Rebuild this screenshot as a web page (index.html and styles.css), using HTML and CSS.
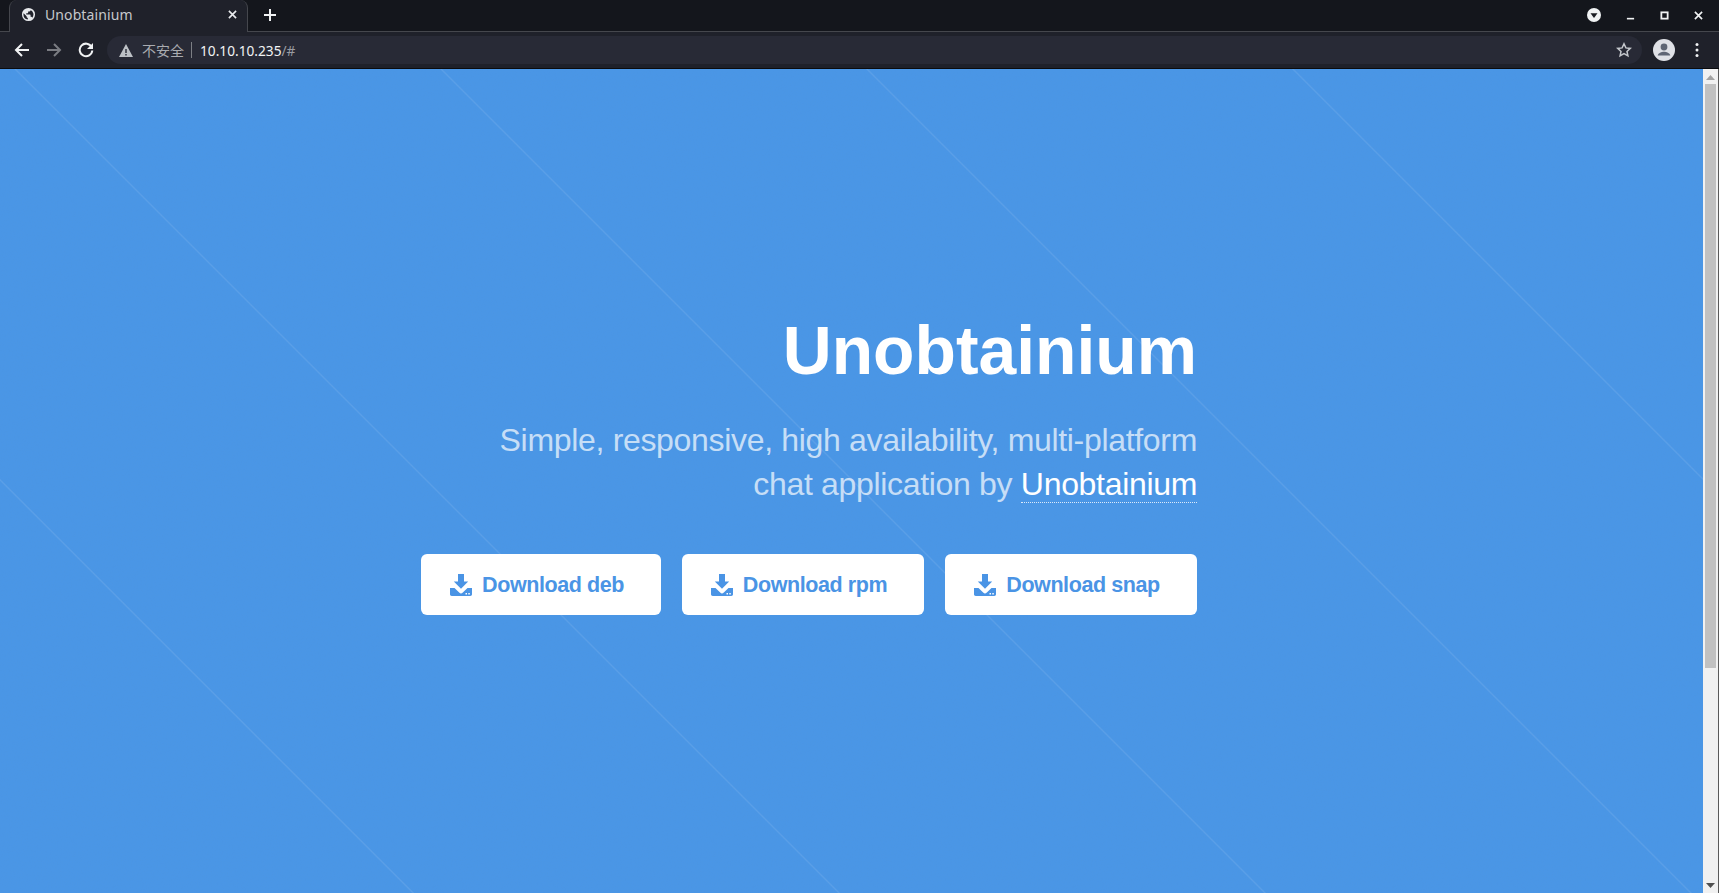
FILE: index.html
```html
<!DOCTYPE html>
<html lang="en">
<head>
  <meta charset="UTF-8">
  <title>Unobtainium</title>
  <link rel="stylesheet" href="styles.css">
</head>
<body>
  <div class="tabstrip">
    <div class="tab">
      <svg class="tab-globe" viewBox="0 0 16 16"><path fill="#e8eaed" d="M8 1a7 7 0 1 0 0 14A7 7 0 0 0 8 1zM2.600 8c0-.5.1-1 .2-1.400L6 9.800v.7c0 .7.6 1.300 1.300 1.300v1.600A5.400 5.400 0 0 1 2.600 8zm9.400 3.400c-.2-.5-.7-.9-1.200-.9h-.6V8.700c0-.4-.3-.7-.7-.7H5.600V6.700h1.300c.4 0 .7-.3.7-.7V4.700h1.400c.7 0 1.300-.6 1.300-1.300v-.3A5.400 5.400 0 0 1 12 11.400z"/></svg>
      <span class="tab-title">Unobtainium</span>
      <svg class="tab-close" viewBox="0 0 10 10"><path d="M1 1l8 8M9 1L1 9" stroke="#e8eaed" stroke-width="1.800"/></svg>
    </div>
    <svg class="new-tab" viewBox="0 0 12 12"><path d="M6 0v12M0 6h12" stroke="#f1f3f4" stroke-width="2"/></svg>
    <div class="window-controls">
      <span class="profile-drop"><svg viewBox="0 0 14 14"><circle cx="7" cy="7" r="7" fill="#f1f3f4"/><path d="M3.500 5.200h7L7 10z" fill="#1a1c22"/></svg></span>
      <svg class="win-btn" viewBox="0 0 10 10"><path d="M1 8.500h8" stroke="#f1f3f4" stroke-width="1.800"/></svg>
      <svg class="win-btn" viewBox="0 0 10 10"><rect x="1.500" y="1.500" width="7" height="7" fill="none" stroke="#f1f3f4" stroke-width="2"/></svg>
      <svg class="win-btn" viewBox="0 0 10 10"><path d="M1 1l8 8M9 1L1 9" stroke="#f1f3f4" stroke-width="1.800"/></svg>
    </div>
  </div>

  <div class="toolbar">
    <svg class="nav-icon" viewBox="0 0 16 16"><path d="M15 8H2M8 2L2 8l6 6" fill="none" stroke="#f1f3f4" stroke-width="2"/></svg>
    <svg class="nav-icon" viewBox="0 0 16 16"><path d="M1 8h13M8 2l6 6-6 6" fill="none" stroke="#7a7c82" stroke-width="2"/></svg>
    <svg class="nav-icon" viewBox="0 0 16 16"><path d="M13.600 5A6.300 6.300 0 1 0 14.300 8.500" fill="none" stroke="#f1f3f4" stroke-width="2"/><path d="M15 1v6H9z" fill="#f1f3f4"/></svg>
    <div class="omnibox">
      <svg class="warn-icon" viewBox="0 0 14 13"><path fill-rule="evenodd" fill="#bdc1c6" d="M7 0l7 13H0zM6.300 5v4h1.400V5zm0 5v1.400h1.400V10z"/></svg>
      <span class="not-secure">不安全</span>
      <span class="omni-sep"></span>
      <span class="url">10.10.10.235<span class="url-rest">/#</span></span>
      <svg class="star-icon" viewBox="0 0 16 16"><path d="M8 1.800l1.900 4.100 4.400.5-3.300 3 .9 4.400L8 11.600l-3.900 2.200.9-4.400-3.300-3 4.400-.5z" fill="none" stroke="#c4c7cc" stroke-width="1.500"/></svg>
    </div>
    <svg class="avatar" viewBox="0 0 22 22"><circle cx="11" cy="11" r="11" fill="#dfe1e6"/><circle cx="11" cy="8" r="3.400" fill="#5f6674"/><path d="M4.700 16.400c.6-2.500 3.800-3.700 6.300-3.700s5.700 1.200 6.300 3.700z" fill="#5f6674"/></svg>
    <svg class="menu-icon" viewBox="0 0 4 16"><circle cx="2" cy="2.500" r="1.500" fill="#f1f3f4"/><circle cx="2" cy="8" r="1.500" fill="#f1f3f4"/><circle cx="2" cy="13.500" r="1.500" fill="#f1f3f4"/></svg>
  </div>

  <div class="viewport">
    <section class="hero">
      <svg class="grain" aria-hidden="true">
        <filter id="grainFilter"><feTurbulence type="fractalNoise" baseFrequency="0.8" numOctaves="2"/><feColorMatrix values="0 0 0 0 0.1  0 0 0 0 0.3  0 0 0 0 0.6  0 0 0 1.400 -0.500"/></filter>
        <rect width="100%" height="100%" filter="url(#grainFilter)"/>
      </svg>
      <div class="hero-body">
        <h1 class="title">Unobtainium</h1>
        <p class="subtitle">Simple, responsive, high availability, multi-platform<br>chat application by <a class="brand" href="#">Unobtainium</a></p>
        <div class="buttons">
          <a class="button btn-deb" href="#"><svg class="dl-icon" viewBox="0 0 22 22"><use href="#dl"/></svg>Download deb</a>
          <a class="button btn-rpm" href="#"><svg class="dl-icon" viewBox="0 0 22 22"><use href="#dl"/></svg>Download rpm</a>
          <a class="button btn-snap" href="#"><svg class="dl-icon" viewBox="0 0 22 22"><use href="#dl"/></svg>Download snap</a>
        </div>
      </div>
    </section>
    <div class="scrollbar">
      <svg class="sb-arrow" viewBox="0 0 9 5"><path d="M4.500 0L9 5H0z" fill="#a3a3a3"/></svg>
      <div class="sb-thumb"></div>
      <svg class="sb-arrow sb-arrow-down" viewBox="0 0 9 5"><path d="M0 0h9L4.500 5z" fill="#505050"/></svg>
    </div>
  </div>

  <svg class="defs" width="0" height="0">
    <symbol id="dl" viewBox="0 0 22 22">
      <path fill="#4a94e5" fill-rule="evenodd" d="M8 0h6v7.500h4.200L11 14.800 3.800 7.500H8zM0 14h4.500l4.700 4.500a2.500 2.500 0 0 0 3.600 0L17.500 14H22v6.300c0 .9-.7 1.700-1.700 1.700H1.700C.8 22 0 21.200 0 20.300zm15.500 5v1.500H17V19zm2.800 0v1.500h1.500V19z"/>
    </symbol>
  </svg>
</body>
</html>
```

FILE: styles.css
```css
* {
  box-sizing: border-box;
}
html, body {
  margin: 0;
  height: 100%;
  overflow: hidden;
}
body {
  display: flex;
  flex-direction: column;
  background: #1f212a;
  font-family: "Liberation Sans", sans-serif;
}

/* browser chrome */
.tabstrip {
  height: 32px;
  flex: none;
  display: flex;
  align-items: flex-start;
  padding-left: 9px;
  background: #14161c;
  border-bottom: 1px solid #45474d;
}
.tab {
  width: 239px;
  height: 32px;
  display: flex;
  align-items: center;
  padding: 0 10px 3px 11px;
  background: #1f212a;
  border: 1px solid #45474d;
  border-top: none;
  border-bottom: none;
  border-radius: 8px 8px 0 0;
}
.tab-globe {
  width: 15px;
  height: 15px;
  flex: none;
}
.tab-title {
  flex: 1;
  margin-left: 9px;
  color: #c6c8cc;
  font-family: "Noto Sans", sans-serif;
  font-size: 14px;
  letter-spacing: 0.1px;
}
.tab-close {
  width: 9px;
  height: 9px;
  flex: none;
}
.new-tab {
  width: 12px;
  height: 12px;
  margin: 9px 0 0 16px;
}
.window-controls {
  margin-left: auto;
  height: 30px;
  display: flex;
  align-items: center;
  padding-right: 16px;
}
.profile-drop svg {
  display: block;
  width: 14px;
  height: 14px;
}
.win-btn {
  width: 9px;
  height: 9px;
  margin-left: 25px;
}

.toolbar {
  height: 36px;
  flex: none;
  display: flex;
  align-items: center;
  padding: 0 20px 0 14px;
  background: #1f212a;
}
.nav-icon {
  width: 16px;
  height: 16px;
  flex: none;
  margin-right: 16px;
}
.omnibox {
  flex: 1;
  height: 28px;
  margin-left: -3px;
  display: flex;
  align-items: center;
  padding: 0 10px 0 12px;
  background: #282a36;
  border-radius: 14px;
}
.warn-icon {
  width: 14px;
  height: 13px;
  flex: none;
}
.not-secure {
  margin-left: 9px;
  color: #a9abb0;
  font-family: "Noto Sans CJK SC", sans-serif;
  font-size: 14px;
}
.omni-sep {
  width: 1px;
  height: 16px;
  margin: 0 8px 0 7px;
  background: #7d7f85;
}
.url {
  color: #f1f3f4;
  font-family: "Noto Sans", sans-serif;
  font-size: 13.7px;
}
.url-rest {
  color: #9a9ca2;
}
.star-icon {
  width: 16px;
  height: 16px;
  margin-left: auto;
}
.avatar {
  width: 22px;
  height: 22px;
  flex: none;
  margin-left: 11px;
}
.menu-icon {
  width: 4px;
  height: 16px;
  flex: none;
  margin-left: 20px;
}

/* page */
.viewport {
  flex: 1;
  min-height: 0;
  display: flex;
  border-top: 1px solid #0b0c0f;
}
.hero {
  position: relative;
  flex: 1;
  overflow: hidden;
  background-color: #4a96e6;
  background-image: repeating-linear-gradient(45deg, transparent 0, transparent 291.2px, rgba(255, 255, 255, 0.09) 291.6px, rgba(255, 255, 255, 0.09) 292.6px, transparent 293px, transparent 301.2px);
}
.grain {
  position: absolute;
  top: 0;
  left: 0;
  width: 100%;
  height: 100%;
  opacity: 0.14;
}
.hero-body {
  position: relative;
  display: flex;
  flex-direction: column;
  align-items: flex-end;
  padding: 244px 506px 0 0;
  text-align: right;
}
.title {
  margin: 0;
  color: #fff;
  font-size: 67.8px;
  font-weight: 700;
  line-height: 76px;
}
.subtitle {
  margin: 30px 0 0;
  color: rgba(255, 255, 255, 0.7);
  font-size: 32px;
  letter-spacing: -0.32px;
  line-height: 43.500px;
}
.brand {
  color: #fff;
  text-decoration: none;
  border-bottom: 1px dotted rgba(255, 255, 255, 0.8);
}
.buttons {
  display: flex;
  gap: 21px;
  margin-top: 48px;
}
.button {
  height: 61px;
  display: flex;
  align-items: center;
  justify-content: center;
  padding: 1px 8px 0 0;
  background: #fff;
  border-radius: 6px;
  color: #4a94e5;
  font-size: 21.5px;
  font-weight: 700;
  letter-spacing: -0.42px;
  text-decoration: none;
}
.btn-deb {
  width: 240px;
}
.btn-rpm {
  width: 242px;
}
.btn-snap {
  width: 252px;
}
.dl-icon {
  width: 22px;
  height: 22px;
  margin-right: 10px;
}
.defs {
  position: absolute;
}

.scrollbar {
  width: 16px;
  flex: none;
  display: flex;
  flex-direction: column;
  align-items: center;
  padding: 6px 1px 5px 0;
  background: #f1f1f1;
  border-right: 1px solid #5a5a5a;
}
.sb-arrow {
  width: 9px;
  height: 5px;
  flex: none;
}
.sb-thumb {
  width: 11px;
  height: 584px;
  margin-top: 4px;
  background: #c1c1c1;
}
.sb-arrow-down {
  margin-top: auto;
}
```
